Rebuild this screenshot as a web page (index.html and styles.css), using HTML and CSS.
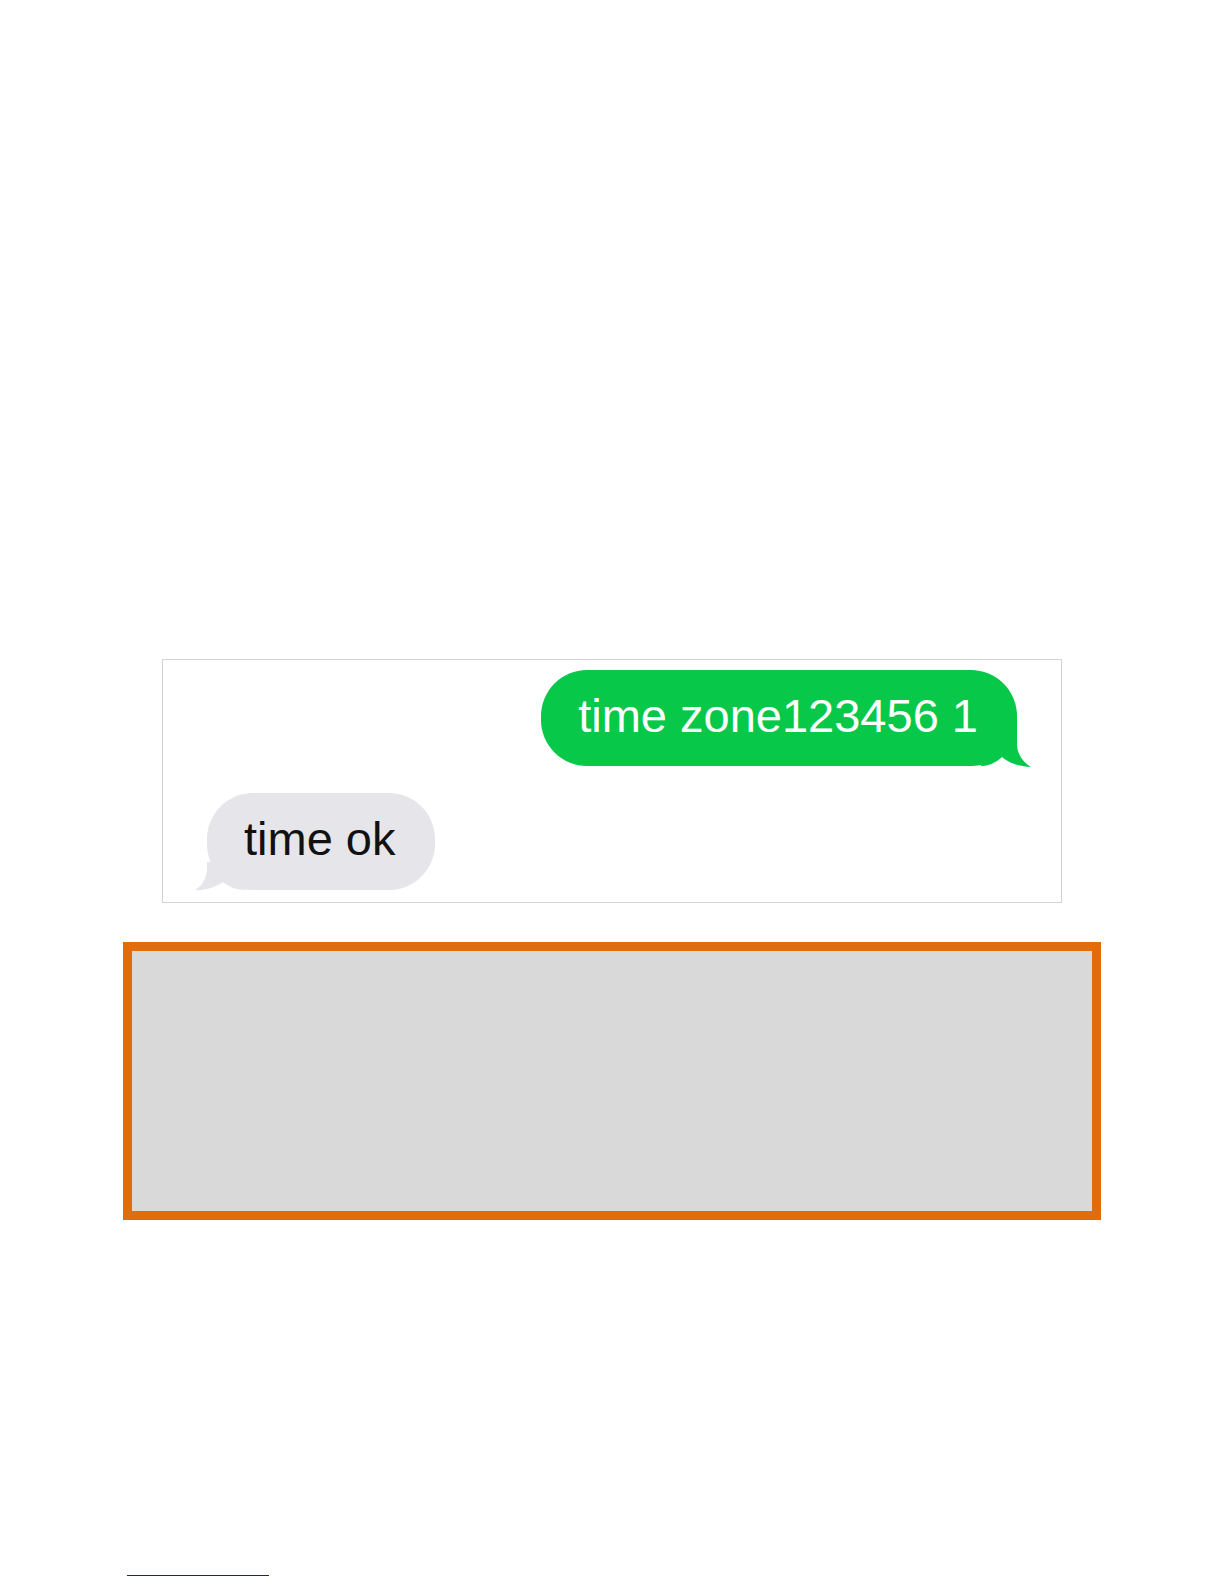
FILE: index.html
```html
<!DOCTYPE html>
<html lang="en">
<head>
<meta charset="utf-8">
<title>Messages</title>
<link rel="stylesheet" href="styles.css">
</head>
<body>
<main class="page">
  <figure class="chat">
    <div class="row row-out">
      <div class="bubble out">time zone123456 1<svg class="tail tail-out" width="52" height="48" viewBox="0 0 52 48"><path d="M0 46 L0 0 L36 0 L36 24 C36 34 42 42 50 47 C41 47 29 44 21 37 C16 42 8 46 0 46 Z" fill="#08c84a"/></svg></div>
    </div>
    <div class="row row-in">
      <div class="bubble in">time ok<svg class="tail tail-in" width="52" height="30" viewBox="0 0 52 30"><path d="M52 28 L52 0 L14 0 L14 6 C14 16 9 24 2 28 C12 29 22 25 30 20 C36 25 44 28 52 28 Z" fill="#e5e5ea"/></svg></div>
    </div>
  </figure>
  <div class="placeholder"></div>
  <div class="footnote-rule"></div>
</main>
</body>
</html>
```

FILE: styles.css
```css
html, body {
  margin: 0;
  background: #ffffff;
}

body {
  font-family: "Liberation Sans", Arial, Helvetica, sans-serif;
}

.page {
  box-sizing: border-box;
  height: 1584px;
  padding: 659px 0 0 123px;
  overflow: hidden;
}

.chat {
  box-sizing: border-box;
  margin: 0 0 0 39px;
  width: 900px;
  height: 244px;
  border: 1px solid #d4d4d4;
  padding: 10px 44px 0 44px;
  display: flex;
  flex-direction: column;
  gap: 27px;
  background: #ffffff;
}

.row {
  display: flex;
}

.row-out {
  justify-content: flex-end;
}

.row-in {
  justify-content: flex-start;
}

.bubble {
  position: relative;
  font-size: 47px;
  line-height: 54px;
  padding: 19px 39px 23px 37px;
  border-radius: 46px;
  white-space: nowrap;
}

.bubble.out {
  background: #08c84a;
  color: #ffffff;
}

.bubble.in {
  background: #e5e5ea;
  color: #111111;
  padding-bottom: 24px;
}

.tail {
  position: absolute;
  display: block;
}

.tail-out {
  right: -16px;
  bottom: -2px;
}

.tail-in {
  left: -14px;
  bottom: -2px;
}

.placeholder {
  box-sizing: border-box;
  margin-top: 39px;
  width: 978px;
  height: 278px;
  border: 9px solid #e36c0a;
  background: #d9d9d9;
}

.footnote-rule {
  margin: 355px 0 0 4px;
  width: 142px;
  border-top: 1px solid #1c1c8c;
}
```
